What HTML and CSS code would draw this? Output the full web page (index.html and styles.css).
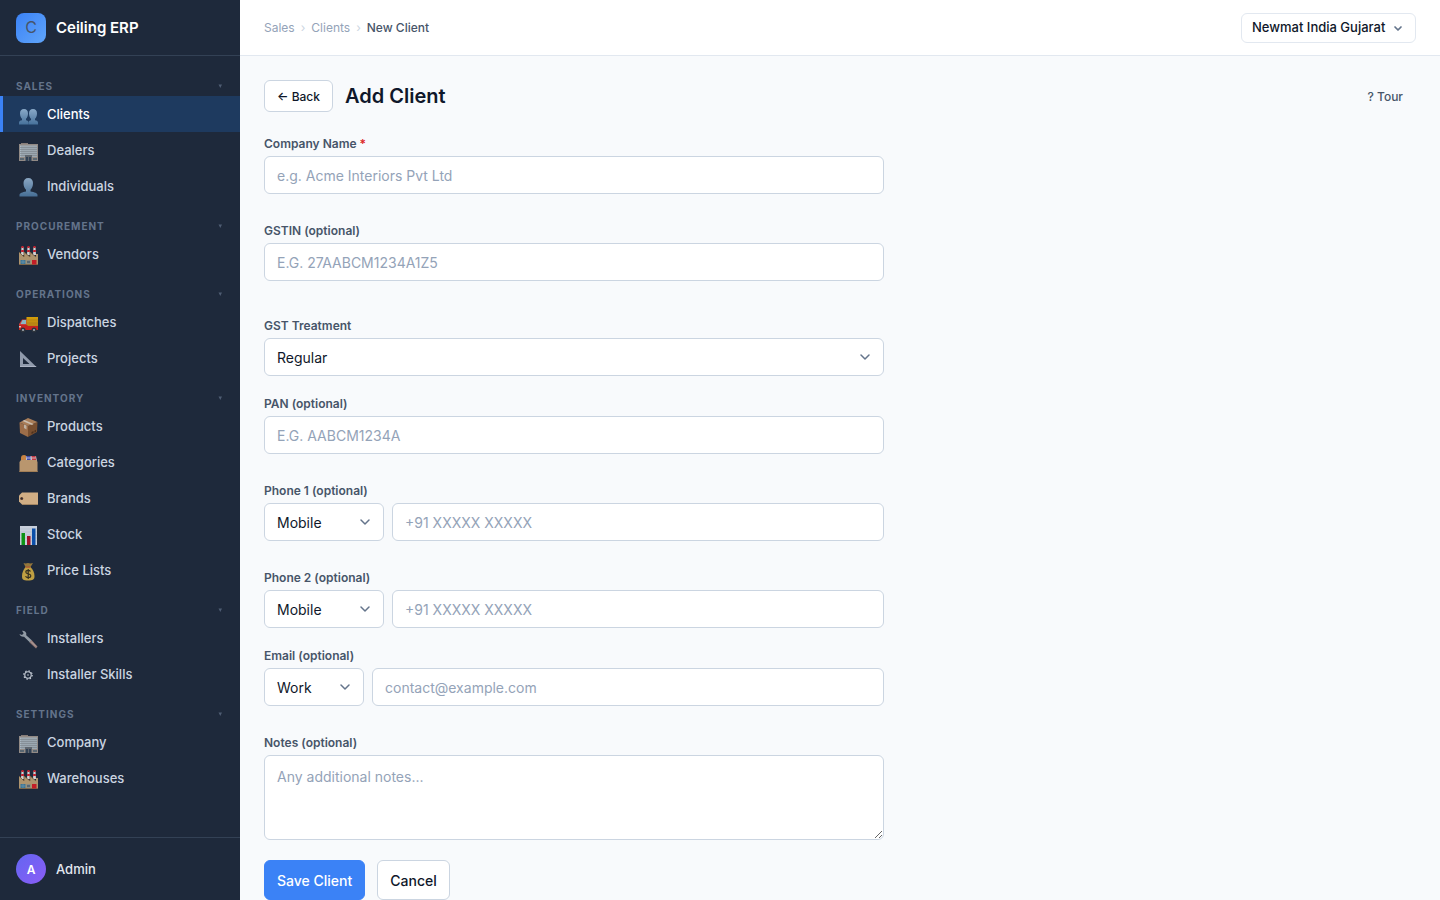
FILE: index.html
```
<!DOCTYPE html>
<html lang="en">
<head>
  <meta charset="UTF-8">
  <meta name="viewport" content="width=device-width, initial-scale=1.0">
  <title>Add Client - Ceiling ERP</title>
  <link rel="stylesheet" href="styles.css">
</head>
<body>
  <!-- Icons used more than once -->
  <svg class="sprite" aria-hidden="true">
    <defs>
      <linearGradient id="bust" x1="0" y1="0" x2="0" y2="1">
        <stop offset="0" stop-color="#9dbddb"/>
        <stop offset="1" stop-color="#4e7ba6"/>
      </linearGradient>
      <linearGradient id="cargo" x1="0" y1="0" x2="0" y2="1">
        <stop offset="0" stop-color="#f5b400"/>
        <stop offset="1" stop-color="#c98a14"/>
      </linearGradient>
    </defs>
    <symbol id="i-caret" viewBox="0 0 8 8">
      <path d="M2.5 2.5h3.5l-1.7 3.5z" fill="#64748b"/>
    </symbol>
    <symbol id="i-building" viewBox="0 0 19 19">
      <path d="M2 1h7v2H2z" fill="#9a8c84"/>
      <path d="M0 2h19v17H0z" fill="#a79b92"/>
      <path d="M1 3.5h17V15H1z" fill="#c3d3dc"/>
      <path d="M1 5.5h17M1 7.5h17M1 9.5h17M1 11.5h17M1 13.5h17M3 3.5V15M5 3.5V15M7 3.5V15M9 3.5V15M11 3.5V15M13 3.5V15M15 3.5V15M17 3.5V15" stroke="#8b9296" stroke-width=".6"/>
      <path d="M6 13h7v6H6z" fill="#6b7178"/>
      <path d="M7 15h2v4H7zM10 15h2v4h-2z" fill="#34465a"/>
      <path d="M1 16h4v2H1zM14 16h4v2h-4z" fill="#64727c"/>
    </symbol>
    <symbol id="i-factory" viewBox="0 0 19 19">
      <path d="M2.5 1h2l.5 8H2zM8.5 1h2l.5 8H8zM14.5 1h2l.5 8h-3z" fill="#f4f0ee"/>
      <path d="M2.5 0h2l.2 2H2.3zM8.5 0h2l.2 2H8.3zM14.5 0h2l.2 2h-2.4zM2.2 4h2.7v2H2.1zM8.2 4h2.7v2H8.1zM14.2 4h2.7v2h-2.8z" fill="#e0202c"/>
      <path d="M0 6l5 5V6l6 5V6l6 5V8h2v11H0z" fill="#c8a777"/>
      <path d="M0 6l5 5V6l6 5V6l6 5" fill="none" stroke="#8b6b43" stroke-width=".8"/>
      <path d="M0 18h19v1H0z" fill="#8d744f"/>
      <path d="M1.5 14h5v4h-5z" fill="#3f82a8"/>
      <path d="M4 14v4M1.5 16h5" stroke="#8fb6c9" stroke-width=".5"/>
      <path d="M7.5 14h4v4h-4z" fill="#999c96"/>
      <path d="M8 15h3v2H8z" fill="#64747c"/>
      <path d="M13 14h4.500v4.500H13z" fill="#e01b24"/>
    </symbol>
  </svg>

  <div class="app">
    <aside class="sidebar">
      <div class="brand">
        <div class="brand-icon">C</div>
        <span class="brand-name">Ceiling ERP</span>
      </div>

      <nav class="nav">
        <button type="button" class="nav-section">Sales<svg class="caret"><use href="#i-caret"/></svg></button>
        <a href="#" class="nav-item active">
          <svg class="nav-icon" viewBox="0 0 19 19" fill="url(#bust)">
            <path d="M5 3c2.600 0 4 1.700 4 4.500 0 2.500-1 4.500-2 5.300v1.400c1.500.5 2.500.9 2.500 2.300v2H0v-2c0-1.400 1.200-1.900 3-2.300v-1.400C2 12 1 10 1 7.500 1 4.700 2.400 3 5 3z"/>
            <path d="M14 3c2.600 0 4 1.700 4 4.500 0 2.500-1 4.500-2 5.300v1.400c1.800.4 3 .9 3 2.300v2H9.500v-2c0-1.400 1-1.800 2.500-2.300v-1.400c-1-.8-2-2.800-2-5.300C10 4.700 11.400 3 14 3z"/>
          </svg>
          Clients
        </a>
        <a href="#" class="nav-item"><svg class="nav-icon"><use href="#i-building"/></svg>Dealers</a>
        <a href="#" class="nav-item">
          <svg class="nav-icon" viewBox="0 0 19 19" fill="url(#bust)">
            <path d="M9.300 0c3 0 4.700 2 4.700 5 0 3-1 5.500-2.500 6.800v1.700c4 .8 7 1.600 7 3.500v1.500H.5V17c0-1.900 3-2.700 6.500-3.500v-1.700C5.500 10.500 4.500 8 4.500 5c0-3 1.800-5 4.800-5z"/>
          </svg>
          Individuals
        </a>

        <button type="button" class="nav-section">Procurement<svg class="caret"><use href="#i-caret"/></svg></button>
        <a href="#" class="nav-item"><svg class="nav-icon"><use href="#i-factory"/></svg>Vendors</a>

        <button type="button" class="nav-section">Operations<svg class="caret"><use href="#i-caret"/></svg></button>
        <a href="#" class="nav-item">
          <svg class="nav-icon" viewBox="0 0 19 19">
            <path d="M3 5.500h6V14H0v-4z" fill="#e8403a"/>
            <path d="M3.500 6H7v4H1.500z" fill="#9fd0dc"/>
            <path d="M7.500 3H19v11H7.500z" fill="url(#cargo)"/>
            <path d="M8 6h11M8 9h11" stroke="#c58c12" stroke-width=".6"/>
            <path d="M0 11h8l1 1h10v4H0z" fill="#e3231b"/>
            <path d="M0 12h2v1.500H0z" fill="#f7e6d8"/>
            <circle cx="4" cy="16" r="2.500" fill="#30363d"/>
            <circle cx="15" cy="16" r="2.500" fill="#30363d"/>
            <circle cx="4" cy="16" r="1.100" fill="#b9c0c5"/>
            <circle cx="15" cy="16" r="1.100" fill="#b9c0c5"/>
          </svg>
          Dispatches
        </a>
        <a href="#" class="nav-item">
          <svg class="nav-icon" viewBox="0 0 19 19">
            <path d="M1 1l16.500 16H1zM4 8v6h6.500z" fill="#a5aebf" fill-rule="evenodd"/>
            <path d="M1 16h15.500l1 1H1z" fill="#c5ccdb"/>
          </svg>
          Projects
        </a>

        <button type="button" class="nav-section">Inventory<svg class="caret"><use href="#i-caret"/></svg></button>
        <a href="#" class="nav-item">
          <svg class="nav-icon" viewBox="0 0 19 19">
            <path d="M.5 4.500L9 8v11l-8-4z" fill="#b37a4c"/>
            <path d="M9 8l9.500-4-.5 10-9 5z" fill="#88562f"/>
            <path d="M.5 4.500L9 0l9.500 4L9 8z" fill="#c28c5e"/>
            <path d="M3.500 3L5.500 2l9 4-1.500 1z" fill="#e9d8c5"/>
            <path d="M5 6.500l2.500 1v4L5 10z" fill="#ddc9b4"/>
            <path d="M12.500 14l2-1v2l-2 1zM15.500 12.500l1.500-.8v2l-1.500.8z" fill="#553318"/>
          </svg>
          Products
        </a>
        <a href="#" class="nav-item">
          <svg class="nav-icon" viewBox="0 0 19 19">
            <path d="M2 4c0-2 1-3 3-3s2.500 1 2.500 3v3H2z" fill="#e59345"/>
            <path d="M7 2h5v5H7z" fill="#d5d7f0"/>
            <path d="M7.500 2h4v1.500h-4zM8 4.500h3.500V6H8z" fill="#4450bd"/>
            <path d="M12 2h5l1 5h-6z" fill="#f0d3d5"/>
            <path d="M12.500 2h4l.3 1.500h-4zM13 4.500h4V6h-4z" fill="#e23a45"/>
            <path d="M2 6h15.500l1 2v10H.5V8z" fill="#d5aa78"/>
            <path d="M.5 17h18v1H.5z" fill="#ba8d5b"/>
          </svg>
          Categories
        </a>
        <a href="#" class="nav-item">
          <svg class="nav-icon" viewBox="0 0 19 19">
            <path d="M3 2.500h16v12H3l-3-3v-6z" fill="#f1c692"/>
            <path d="M3 14h16v.8H3z" fill="#c89e6c"/>
            <circle cx="2.700" cy="8.500" r="1.500" fill="#5e3c29"/>
            <circle cx="2.700" cy="8.500" r=".6" fill="#1e293b"/>
          </svg>
          Brands
        </a>
        <a href="#" class="nav-item">
          <svg class="nav-icon" viewBox="0 0 19 19">
            <path d="M1 0h17v19H1z" fill="#e6edf7"/>
            <path d="M1 3h17M1 6h17M1 9h17M1 12h17M1 15h17" stroke="#c3cee0" stroke-width=".5"/>
            <path d="M2.500 7H6v12H2.500z" fill="#0aa60f"/>
            <path d="M8 10h3.500v9H8z" fill="#b80d28"/>
            <path d="M13 2.500h3.500V19H13z" fill="#0a56bd"/>
          </svg>
          Stock
        </a>
        <a href="#" class="nav-item">
          <svg class="nav-icon" viewBox="0 0 19 19">
            <path d="M4.500 1l2 .5L9 1l2.500.5L14 1l-2.500 4h-5z" fill="#a9843b"/>
            <path d="M6.500 5h5c2.500 2.500 4 5.500 4 9 0 3.500-1.500 4.500-6.500 4.500S3 17.500 3 14c0-3.500 1.500-6.500 3.500-9z" fill="#dcb444"/>
            <path d="M6.500 4.500h5v1.200h-5z" fill="#c65b2e"/>
            <path d="M11.500 9.500C11 8.700 10.200 8.400 9.200 8.400c-1.500 0-2.400.7-2.400 1.700 0 2.400 5 1.100 5 3.600 0 1.200-1 1.900-2.600 1.900-1.300 0-2.200-.5-2.700-1.400M9.200 7v10" fill="none" stroke="#3a321d" stroke-width="1.200"/>
          </svg>
          Price Lists
        </a>

        <button type="button" class="nav-section">Field<svg class="caret"><use href="#i-caret"/></svg></button>
        <a href="#" class="nav-item">
          <svg class="nav-icon" viewBox="0 0 19 19">
            <path d="M3 .8c2-.4 4 .8 4.300 2.700l-.1 1.700L13 10.500l-2 2-6-5.800c-2 .4-4-.7-4.500-2.700L3 5l1.700-1.700z" fill="#a7b0b8"/>
            <path d="M12.500 10l6 6.500-1.500 2-6.500-6z" fill="#a8867f"/>
            <path d="M12 11.500l5 5" stroke="#dacbc8" stroke-width=".8"/>
          </svg>
          Installers
        </a>
        <a href="#" class="nav-item">
          <svg class="nav-icon" viewBox="0 0 19 19" fill="none" stroke="#e2e8f0">
            <circle cx="9" cy="9" r="3.200" stroke-width="1.100"/>
            <circle cx="9" cy="9" r="4.200" stroke-width="1.200" stroke-dasharray="1.400 1.900"/>
            <circle cx="9" cy="9" r=".8" fill="#e2e8f0" stroke="none"/>
          </svg>
          Installer Skills
        </a>

        <button type="button" class="nav-section">Settings<svg class="caret"><use href="#i-caret"/></svg></button>
        <a href="#" class="nav-item"><svg class="nav-icon"><use href="#i-building"/></svg>Company</a>
        <a href="#" class="nav-item"><svg class="nav-icon"><use href="#i-factory"/></svg>Warehouses</a>
      </nav>

      <div class="user">
        <div class="avatar">A</div>
        <span>Admin</span>
      </div>
    </aside>

    <div class="main">
      <header class="topbar">
        <nav class="breadcrumb">
          <a href="#">Sales</a>
          <span class="sep">›</span>
          <a href="#">Clients</a>
          <span class="sep">›</span>
          <span class="current">New Client</span>
        </nav>
        <select class="company-select" aria-label="Company">
          <option>Newmat India Gujarat</option>
        </select>
      </header>

      <main class="content">
        <div class="page-header">
          <button type="button" class="btn btn-sm">← Back</button>
          <h1>Add Client</h1>
          <button type="button" class="btn-tour">? Tour</button>
        </div>

        <form class="form">
          <div class="field has-hint">
            <label for="company-name">Company Name <span class="required">*</span></label>
            <input type="text" id="company-name" placeholder="e.g. Acme Interiors Pvt Ltd">
          </div>

          <div class="field has-status">
            <label for="gstin">GSTIN (optional)</label>
            <input type="text" id="gstin" placeholder="E.G. 27AABCM1234A1Z5">
          </div>

          <div class="field">
            <label for="gst-treatment">GST Treatment</label>
            <select id="gst-treatment">
              <option>Regular</option>
            </select>
          </div>

          <div class="field has-hint">
            <label for="pan">PAN (optional)</label>
            <input type="text" id="pan" placeholder="E.G. AABCM1234A">
          </div>

          <div class="field has-hint">
            <label for="phone1">Phone 1 (optional)</label>
            <div class="phone-row">
              <select aria-label="Phone 1 type">
                <option>Mobile</option>
              </select>
              <input type="tel" id="phone1" placeholder="+91 XXXXX XXXXX">
            </div>
          </div>

          <div class="field">
            <label for="phone2">Phone 2 (optional)</label>
            <div class="phone-row">
              <select aria-label="Phone 2 type">
                <option>Mobile</option>
              </select>
              <input type="tel" id="phone2" placeholder="+91 XXXXX XXXXX">
            </div>
          </div>

          <div class="field has-hint">
            <label for="email">Email (optional)</label>
            <div class="email-row">
              <select aria-label="Email type">
                <option>Work</option>
              </select>
              <input type="email" id="email" placeholder="contact@example.com">
            </div>
          </div>

          <div class="field">
            <label for="notes">Notes (optional)</label>
            <textarea id="notes" rows="3" placeholder="Any additional notes..."></textarea>
          </div>

          <div class="actions">
            <button type="submit" class="btn btn-primary">Save Client</button>
            <button type="button" class="btn">Cancel</button>
          </div>
        </form>
      </main>
    </div>
  </div>
</body>
</html>
```
FILE: styles.css
```
* {
  box-sizing: border-box;
  margin: 0;
  padding: 0;
}
body {
  font-family: 'Inter', sans-serif;
  font-size: 14px;
  line-height: 21px;
  color: #0f172a;
  background: #f8fafc;
}
button, input, select, textarea {
  font: inherit;
  color: inherit;
}
a {
  color: inherit;
  text-decoration: none;
}
.sprite {
  position: absolute;
  width: 0;
  height: 0;
}
.app {
  display: flex;
  height: 100vh;
}

/* Sidebar */
.sidebar {
  width: 240px;
  flex-shrink: 0;
  display: flex;
  flex-direction: column;
  background: #1e293b;
}
.brand {
  display: flex;
  align-items: center;
  gap: 10px;
  height: 56px;
  padding: 0 16px;
  border-bottom: 1px solid #334155;
}
.brand-icon {
  width: 30px;
  height: 30px;
  border-radius: 8px;
  display: flex;
  align-items: center;
  justify-content: center;
  font-size: 16px;
  color: #475569;
  background: linear-gradient(135deg, #3b82f6, #60a5fa);
}
.brand-name {
  font-size: 15px;
  font-weight: 600;
  color: #fff;
}
.nav {
  flex: 1;
  min-height: 0;
  padding: 8px 0;
  overflow-y: auto;
  scrollbar-width: none;
}
.nav-section {
  display: flex;
  align-items: center;
  justify-content: space-between;
  width: 100%;
  padding: 16px 16px 4px;
  border: none;
  background: none;
  font-size: 10px;
  font-weight: 700;
  line-height: 12px;
  letter-spacing: 1px;
  text-transform: uppercase;
  color: #64748b;
  cursor: pointer;
}
.caret {
  width: 8px;
  height: 8px;
  opacity: 0.7;
}
.nav-item {
  display: flex;
  align-items: center;
  gap: 9px;
  height: 36px;
  padding: 0 16px;
  border-left: 3px solid transparent;
  font-size: 13px;
  font-weight: 500;
  color: #cbd5e1;
}
.nav-item:hover {
  color: #fff;
}
.nav-item.active {
  color: #fff;
  background: #1e3a5f;
  border-left-color: #3b82f6;
}
.nav-icon {
  width: 19px;
  height: 22px;
  padding-top: 3px;
  flex-shrink: 0;
  opacity: 0.85;
}
.user {
  display: flex;
  align-items: center;
  gap: 10px;
  padding: 16px;
  border-top: 1px solid #334155;
  font-size: 13px;
  font-weight: 500;
  color: #e2e8f0;
}
.avatar {
  width: 30px;
  height: 30px;
  border-radius: 50%;
  display: flex;
  align-items: center;
  justify-content: center;
  font-size: 12px;
  font-weight: 600;
  color: #fff;
  background: linear-gradient(135deg, #6366f1, #8b5cf6);
}

/* Top bar */
.main {
  flex: 1;
  min-width: 0;
  display: flex;
  flex-direction: column;
}
.topbar {
  display: flex;
  align-items: center;
  justify-content: space-between;
  flex-shrink: 0;
  height: 56px;
  padding: 0 24px;
  background: #fff;
  border-bottom: 1px solid #e2e8f0;
}
.breadcrumb {
  display: flex;
  gap: 6px;
  font-size: 12px;
  color: #94a3b8;
}
.breadcrumb .sep {
  color: #cbd5e1;
}
.breadcrumb .current {
  font-weight: 500;
  color: #475569;
}
select {
  appearance: none;
  background: #fff url("data:image/svg+xml,%3Csvg xmlns='http://www.w3.org/2000/svg' width='12' height='12' viewBox='0 0 12 12' fill='none' stroke='%2364748b' stroke-width='1.5' stroke-linecap='round' stroke-linejoin='round'%3E%3Cpath d='M2 4l4 4 4-4'/%3E%3C/svg%3E") no-repeat right 12px center;
}
.company-select {
  height: 30px;
  padding: 0 29px 0 10px;
  border: 1px solid #e2e8f0;
  border-radius: 6px;
  font-size: 13px;
  font-weight: 500;
  background-image: url("data:image/svg+xml,%3Csvg xmlns='http://www.w3.org/2000/svg' width='10' height='10' viewBox='0 0 10 10' fill='none' stroke='%2364748b' stroke-width='1.7' stroke-linecap='round' stroke-linejoin='round'%3E%3Cpath d='M2 4l3 3 3-3'/%3E%3C/svg%3E");
}

/* Page */
.content {
  flex: 1;
  min-height: 0;
  padding: 24px;
  overflow-y: auto;
  scrollbar-width: none;
}
.page-header {
  display: flex;
  align-items: center;
  gap: 12px;
  margin-bottom: 24px;
}
.page-header h1 {
  font-size: 20px;
  font-weight: 600;
  line-height: 30px;
}
.btn {
  height: 40px;
  padding: 0 12px;
  border: 1px solid #cbd5e1;
  border-radius: 6px;
  background: #fff;
  font-weight: 500;
  cursor: pointer;
}
.btn-sm {
  height: 32px;
  font-size: 12px;
}
.btn-primary {
  color: #fff;
  background: #3b82f6;
  border-color: #3b82f6;
}
.btn-tour {
  margin-left: auto;
  padding: 4px 13px;
  border: none;
  background: none;
  font-size: 12px;
  font-weight: 500;
  color: #475569;
  cursor: pointer;
}

/* Form */
.form {
  max-width: 620px;
}
.field {
  margin-bottom: 20px;
}
.field.has-hint {
  padding-bottom: 9px;
}
.field.has-status {
  padding-bottom: 17px;
}
.field label {
  display: block;
  margin-bottom: 4px;
  font-size: 12px;
  font-weight: 600;
  line-height: 16px;
  color: #475569;
}
.required {
  color: #dc2626;
}
.field input,
.field select,
.field textarea {
  display: block;
  width: 100%;
  height: 38px;
  padding: 0 12px;
  border: 1px solid #cbd5e1;
  border-radius: 6px;
  background-color: #fff;
}
.field textarea {
  height: auto;
  padding: 10px 12px;
  resize: vertical;
}
.field input:focus,
.field select:focus,
.field textarea:focus {
  outline: none;
  border-color: #3b82f6;
}
::placeholder {
  color: #94a3b8;
}
.phone-row,
.email-row {
  display: grid;
  grid-template-columns: 120px 1fr;
  gap: 8px;
}
.email-row {
  grid-template-columns: 100px 1fr;
}
.actions {
  display: flex;
  gap: 12px;
}
```
